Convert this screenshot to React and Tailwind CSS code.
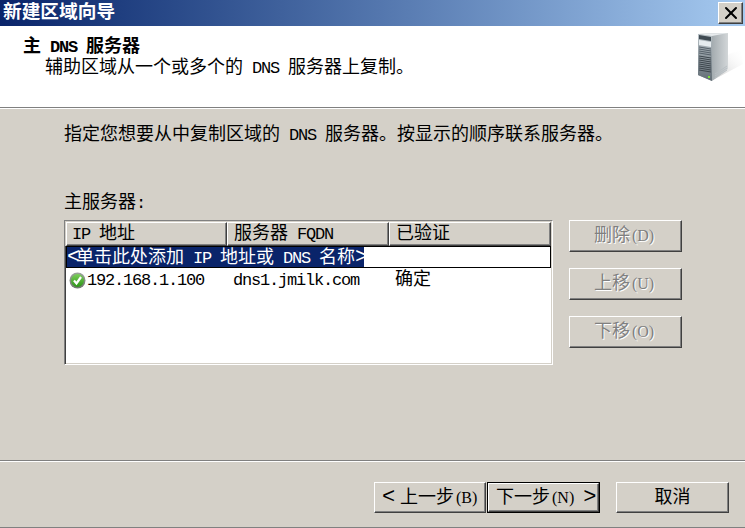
import React from "react";
import { X } from "lucide-react";

const cjk = "[font-family:'Liberation_Mono','Noto_Sans_CJK_SC',monospace]";

// Latin text is half the width of the CJK text around it
const L = ({ children }) => <span className="text-[17px] tracking-[-1.2px]">{children}</span>;

// Accelerator keys on buttons are proportional, not fixed width
const Accel = ({ children }) => (
  <span className="text-[16px] [font-family:'Liberation_Serif',serif] ml-[2px]">{children}</span>
);

// Angle brackets are tall and thin in the picture, same half-width advance
const Angle = ({ children }) => (
  <span className="text-[22px] leading-none tracking-[-4.2px] font-light">{children}</span>
);

const raised =
  "border border-t-white border-l-white border-r-[#404040] border-b-[#404040] shadow-[inset_-1px_-1px_0_#808080]";

// Right column buttons, always disabled in this step
const SideButton = ({ label, accel }) => (
  <div
    className={`w-[113px] h-[32px] flex items-center justify-center pr-[3px] text-[#808080] [text-shadow:1px_1px_0_#fff] ${raised}`}
  >
    <span>{label}</span>
    <Accel>({accel})</Accel>
  </div>
);

const ColumnHead = ({ className, children }) => (
  <div className={`h-[24px] flex items-center leading-none whitespace-pre ${raised} ${className}`}>
    {children}
  </div>
);

const ServerIcon = () => (
  <svg width="46" height="50" viewBox="0 0 46 50">
    <defs>
      <linearGradient id="side" x1="0" x2="1" y1="0" y2="0">
        <stop offset="0" stopColor="#7c878d" />
        <stop offset="1" stopColor="#d2d6d8" />
      </linearGradient>
      <linearGradient id="front" x1="0" x2="0" y1="0" y2="1">
        <stop offset="0" stopColor="#b9c2c7" />
        <stop offset="1" stopColor="#626d75" />
      </linearGradient>
      <linearGradient id="shade" x1="0" x2="1" y1="1" y2="0">
        <stop offset="0" stopColor="#c4c4c4" />
        <stop offset="1" stopColor="#ffffff" stopOpacity="0" />
      </linearGradient>
    </defs>
    <path d="M16 48 L46 32 L44 18 L32 22 Z" fill="url(#shade)" />
    <path d="M1 2 L31 1 L31 37 L15 49 L1 43 Z" fill="url(#side)" />
    <path d="M1 2 L15 4 L15 49 L1 43 Z" fill="url(#front)" />
    <path d="M1 2 L31 1 L15 4 Z" fill="#e8ecee" />
    <path d="M2 3 L14 5 L14 9 L2 7 Z" fill="#3f4a52" />
    <path d="M2 8 L14 10 L14 15 L2 13 Z" fill="#e6ecef" />
    <path d="M2 15 L14 17 M2 17 L14 19 M2 19 L14 21 M2 21 L14 23" stroke="#56616a" />
    <path d="M2 24 L14 26 M2 26 L14 28 M2 28 L14 30 M2 30 L14 32 M2 32 L14 34 M2 34 L14 36 M2 36 L14 38 M2 38 L14 40" stroke="#3c454c" />
    <rect x="11" y="44" width="2" height="2" fill="#7fe03a" />
    <path d="M18 42 L30 34 M18 44 L30 36 M18 46 L30 38" stroke="#b8bfc3" />
  </svg>
);

const CheckIcon = () => (
  <svg width="17" height="17" viewBox="0 0 17 17">
    <defs>
      <linearGradient id="rim" x1="0" x2="0" y1="0" y2="1">
        <stop offset="0" stopColor="#9aa39a" />
        <stop offset="1" stopColor="#6f766f" />
      </linearGradient>
      <linearGradient id="ball" x1="0" x2="0" y1="0" y2="1">
        <stop offset="0" stopColor="#7ccf5a" />
        <stop offset="1" stopColor="#2c9418" />
      </linearGradient>
    </defs>
    <circle cx="8.5" cy="8.5" r="8" fill="url(#rim)" />
    <circle cx="8.5" cy="8.5" r="6.5" fill="url(#ball)" />
    <path d="M5 8.5 L7.5 11.5 L12 5" fill="none" stroke="#fff" strokeWidth="2.2" />
  </svg>
);

export default function App() {
  return (
    <div className={`w-[745px] h-[528px] flex flex-col bg-[#d4d0c8] text-black text-[18px] leading-[22px] overflow-hidden ${cjk}`}>
      {/* Title bar */}
      <div className="h-[26px] flex items-center justify-between pl-[3px] pr-[2px] bg-gradient-to-r from-[#0a246a] to-[#a6caf0] text-white">
        <span className="text-[18.7px] font-bold">新建区域向导</span>
        <div className={`w-[25px] h-[22px] flex items-center justify-center bg-[#d4d0c8] text-black ${raised}`}>
          <X size={20} strokeWidth={2} absoluteStrokeWidth />
        </div>
      </div>

      {/* Wizard header */}
      <div className="h-[81px] bg-white flex justify-between pl-[23px] pr-[2px] pt-[10px]">
        <div>
          <div className="font-bold h-[21px]">
            主<L> DNS </L>服务器
          </div>
          <div className="pl-[22px]">
            辅助区域从一个或多个的<L> DNS </L>服务器上复制。
          </div>
        </div>
        <div className="-mt-[4px]">
          <ServerIcon />
        </div>
      </div>
      <div className="h-[2px] border-t border-t-[#808080] border-b border-b-white" />

      {/* Body */}
      <div className="flex-1 flex flex-col pl-[64px] pt-[15px]">
        <div className="h-[22px]">
          指定您想要从中复制区域的<L> DNS </L>服务器。按显示的顺序联系服务器。
        </div>
        <div className="h-[22px] mt-[46px]">
          主服务器<L>:</L>
        </div>
        <div className="flex mt-[6px]">
          {/* Server list */}
          <div className="w-[489px] h-[145px] bg-white border border-t-[#808080] border-l-[#808080] border-r-white border-b-white shadow-[inset_1px_1px_0_#404040,inset_-1px_-1px_0_#d4d0c8]">
            <div className="flex pl-[1px] pt-[1px] bg-[#d4d0c8]">
              <ColumnHead className="w-[161px] pl-[5px]">
                <L>IP </L>地址
              </ColumnHead>
              <ColumnHead className="w-[162px] pl-[6px]">
                服务器<L> FQDN</L>
              </ColumnHead>
              <ColumnHead className="w-[162px] pl-[6px]">已验证</ColumnHead>
            </div>
            <div className="mx-[1px] h-[22px] border border-black flex items-center">
              <span className="bg-[#0a246a] text-white h-[20px] leading-[20px] whitespace-pre">
                <Angle>&lt;</Angle>单击此处添加<L> IP </L>地址或<L> DNS </L>名称<Angle>&gt;</Angle>
              </span>
            </div>
            <div className="flex items-center h-[22px] mt-[1px] pl-[4px]">
              <CheckIcon />
              <div className="w-[147px] pl-[1px]"><L>192.168.1.100</L></div>
              <div className="w-[162px]"><L>dns1.jmilk.com</L></div>
              <div>确定</div>
            </div>
          </div>

          {/* Side buttons */}
          <div className="ml-[16px] flex flex-col gap-[16px]">
            <SideButton label="删除" accel="D" />
            <SideButton label="上移" accel="U" />
            <SideButton label="下移" accel="O" />
          </div>
        </div>
      </div>

      {/* Footer */}
      <div className="h-[68px] border-t border-t-[#808080] border-b border-b-[#808080]">
        <div className="h-full border-t border-t-white flex justify-end pt-[20px] pr-[16px]">
          <div className={`w-[112px] h-[31px] flex items-center pl-[7px] whitespace-pre ${raised}`}>
            <Angle>&lt;</Angle>
            <span className="ml-[9px]">上一步</span>
            <Accel>(B)</Accel>
          </div>
          <div className="w-[113px] h-[31px] border border-black ml-[1px]">
            <div className={`h-full flex items-center pl-[7px] whitespace-pre ${raised}`}>
              <span>下一步</span>
              <Accel>(N)</Accel>
              <span className="ml-[9px]"><Angle>&gt;</Angle></span>
            </div>
          </div>
          <div className={`w-[113px] h-[31px] ml-[16px] flex items-center justify-center ${raised}`}>
            取消
          </div>
        </div>
      </div>
    </div>
  );
}
